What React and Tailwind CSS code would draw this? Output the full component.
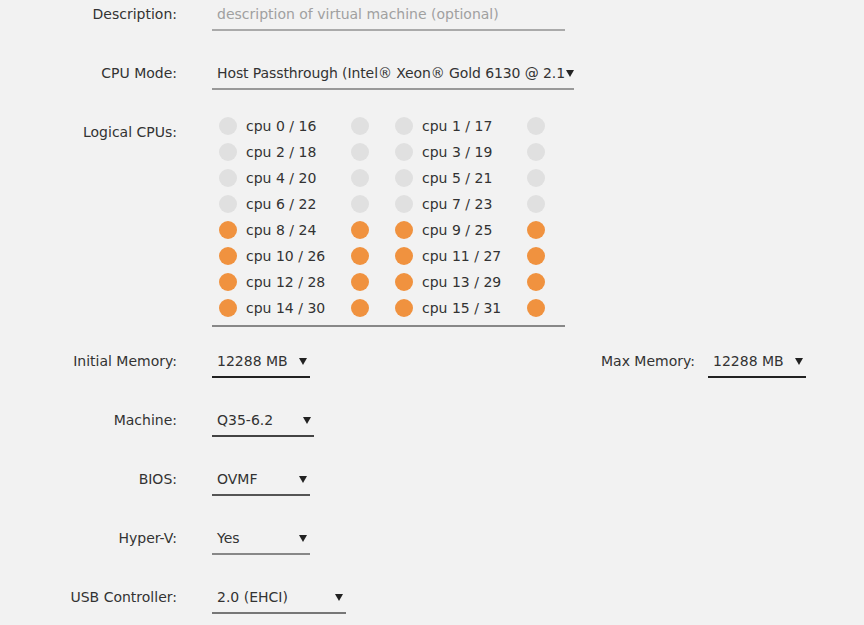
import React from "react";

const Arrow = () => (
  <svg width="8" height="7" viewBox="0 0 8 7" className="block">
    <path d="M0 0 L8 0 L4 7 Z" fill="#222" />
  </svg>
);

function Label({ children, className = "" }) {
  return (
    <div className={`w-[177px] shrink-0 text-right leading-[29px] ${className}`}>{children}</div>
  );
}

function Select({ value, width, border }) {
  return (
    <div
      className={`relative ml-[35px] h-[31px] border-b-2 ${border} pl-[5px] leading-[29px]`}
      style={{ width }}
    >
      {value}
      <div className="absolute right-[3px] top-[11px]">
        <Arrow />
      </div>
    </div>
  );
}

function Dot({ on }) {
  return (
    <div
      className={`h-[18px] w-[18px] shrink-0 rounded-full ${on ? "bg-[#f0923f]" : "bg-[#e0e0e0]"}`}
    />
  );
}

export default function App() {
  const cpus = [];
  for (let i = 0; i < 16; i++) cpus.push(i);
  return (
    <div
      className="h-[625px] w-[864px] overflow-hidden bg-[#f2f2f2] text-[14px] text-[#333]"
      style={{ fontFamily: '"DejaVu Sans", "Open Sans", sans-serif' }}
    >
      {/* Description */}
      <div className="flex">
        <Label>Description:</Label>
        <div className="ml-[35px] h-[31px] w-[353px] border-b-2 border-[#aaa] pl-[5px] leading-[29px] text-[#a0a0a0]">
          description of virtual machine (optional)
        </div>
      </div>

      {/* CPU Mode */}
      <div className="mt-[28px] flex">
        <Label>CPU Mode:</Label>
        <div className="relative ml-[35px] h-[31px] w-[362px] border-b-2 border-[#999] leading-[29px]">
          <div className="whitespace-nowrap pl-[5px] tracking-[-0.1px]">
            Host Passthrough (Intel® Xeon® Gold 6130 @ 2.1
          </div>
          <div className="absolute right-[0px] top-[11px]">
            <Arrow />
          </div>
        </div>
      </div>

      {/* Logical CPUs */}
      <div className="mt-[23px] flex">
        <Label className="pt-[5px]">Logical CPUs:</Label>
        <div className="ml-[35px] w-[353px] border-b-2 border-[#888] pb-[4px] pl-[7px]">
          <div className="grid grid-cols-[150px_150px] gap-x-[26px]">
            {cpus.map((i) => {
              const on = i >= 8;
              return (
                <div key={i} className="flex h-[26px] items-center">
                  <Dot on={on} />
                  <div className="ml-[9px] w-[105px] whitespace-nowrap">
                    cpu {i} / {i + 16}
                  </div>
                  <Dot on={on} />
                </div>
              );
            })}
          </div>
        </div>
      </div>

      {/* Memory */}
      <div className="mt-[20px] flex pr-[58px]">
        <Label>Initial Memory:</Label>
        <Select value="12288 MB" width={98} border="border-[#222]" />
        <div className="ml-auto flex">
          <div className="leading-[29px]">Max Memory:</div>
          <div className="relative ml-[13px] h-[31px] w-[98px] border-b-2 border-[#222] pl-[5px] leading-[29px]">
            12288 MB
            <div className="absolute right-[3px] top-[11px]">
              <Arrow />
            </div>
          </div>
        </div>
      </div>

      <div className="mt-[28px] flex">
        <Label>Machine:</Label>
        <Select value="Q35-6.2" width={102} border="border-[#444]" />
      </div>

      <div className="mt-[28px] flex">
        <Label>BIOS:</Label>
        <Select value="OVMF" width={98} border="border-[#555]" />
      </div>

      <div className="mt-[28px] flex">
        <Label>Hyper-V:</Label>
        <Select value="Yes" width={98} border="border-[#888]" />
      </div>

      <div className="mt-[28px] flex">
        <Label>USB Controller:</Label>
        <Select value="2.0 (EHCI)" width={134} border="border-[#777]" />
      </div>
    </div>
  );
}
